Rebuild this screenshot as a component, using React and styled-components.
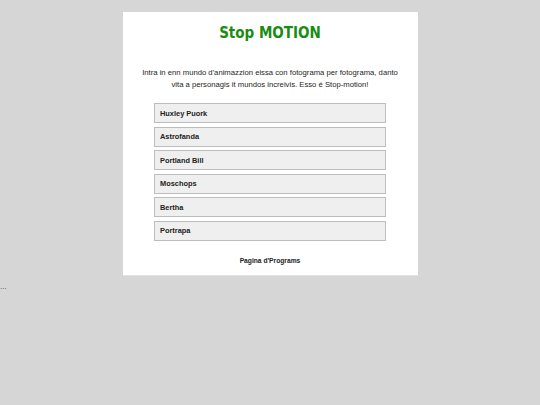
import React from 'react'
import styled, { createGlobalStyle } from 'styled-components'

const programs = ['Huxley Puork', 'Astrofanda', 'Portland Bill', 'Moschops', 'Bertha', 'Portrapa']

const GlobalStyle = createGlobalStyle`
    body {
        margin: 0;
        background: #d6d6d6;
        font-family: "Liberation Sans", Arial, sans-serif;
    }
`

export default function App() {
    return (
        <>
            <GlobalStyle />
            <Page>
                <Card>
                    <Title>Stop MOTION</Title>
                    <Intro>
                        Intra in enn mundo d'animazzion eissa con fotograma per fotograma, danto
                        vita a personagis it mundos increivis. Esso é Stop-motion!
                    </Intro>
                    <List>
                        {programs.map(p => (
                            <ProgramButton key={p}>{p}</ProgramButton>
                        ))}
                    </List>
                    <Footer>Pagina d'Programs</Footer>
                </Card>
                <Dots>...</Dots>
            </Page>
        </>
    )
}

const Page = styled.div`
    padding-top: 12px;
`
const Card = styled.div`
    width: 295px;
    margin: 0 auto;
    background: #fff;
    box-sizing: border-box;
    padding: 11px 8px 9px;
    border-bottom: 1px solid #e4e4e4;
    display: flex;
    flex-direction: column;
    align-items: center;
`
const Title = styled.h1`
    margin: 0;
    font-family: "DejaVu Sans Condensed", "DejaVu Sans", sans-serif;
    font-stretch: condensed;
    font-size: 15px;
    font-weight: bold;
    color: #1a8c12;
    line-height: 20px;
`
const Intro = styled.p`
    margin: 24px 0 0;
    max-width: 262px;
    font-size: 7.7px;
    line-height: 12px;
    color: #1e1e1e;
    text-align: center;
`
const List = styled.div`
    margin-top: 12px;
    width: 232px;
    display: flex;
    flex-direction: column;
    gap: 3.6px;
`
const ProgramButton = styled.button`
    height: 20px;
    box-sizing: border-box;
    background: #efefef;
    border: 1px solid #bdbdbd;
    text-align: left;
    padding: 0 5px;
    font-family: "Liberation Sans", Arial, sans-serif;
    font-size: 7.4px;
    font-weight: bold;
    color: #222;
`
const Footer = styled.div`
    margin-top: 15px;
    font-size: 6.7px;
    font-weight: bold;
    color: #222;
    line-height: 10px;
`
const Dots = styled.div`
    margin-top: 6px;
    font-size: 8px;
    color: #444;
    line-height: 10px;
`
